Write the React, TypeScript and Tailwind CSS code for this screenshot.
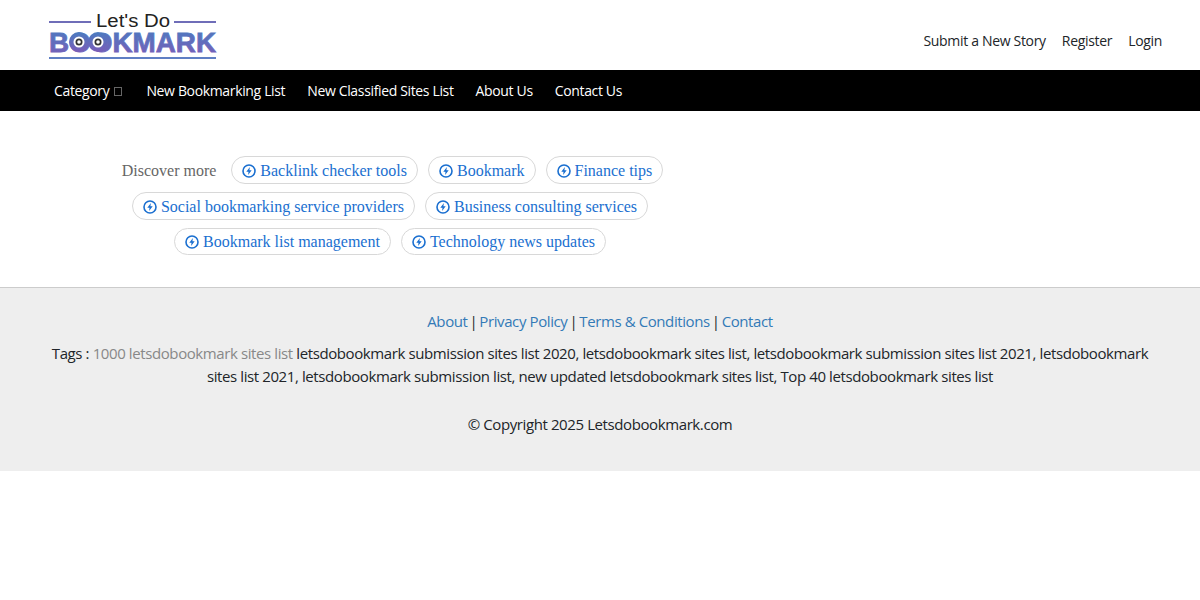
import React from 'react';

const navItems = ['New Bookmarking List', 'New Classified Sites List', 'About Us', 'Contact Us'];

const chipRows = [
  ['Backlink checker tools', 'Bookmark', 'Finance tips'],
  ['Social bookmarking service providers', 'Business consulting services'],
  ['Bookmark list management', 'Technology news updates'],
];

const footerLinks = ['About', 'Privacy Policy', 'Terms & Conditions', 'Contact'];

const BoltIcon = () => (
  <svg viewBox="0 0 14 14" className="w-[14px] h-[14px] shrink-0 mr-[4px] mt-[1px]" fill="none">
    <circle cx="7" cy="7" r="6" stroke="#1a6fd0" strokeWidth="1.6" />
    <path d="M7.9 2.9 4.3 7.8h2.2l-.4 3.3 3.6-4.9H7.4z" fill="#1a6fd0" />
  </svg>
);

const Logo = () => (
  <svg viewBox="0 -3 170 51" className="w-[170px] h-[51px] block">
    <defs>
      <linearGradient id="logoFill" x1="0" y1="0" x2="0" y2="1">
        <stop offset="0" stopColor="#4a7cc0" />
        <stop offset="1" stopColor="#7a5cb8" />
      </linearGradient>
    </defs>
    <rect x="1" y="8" width="42" height="2" fill="#6f6db8" />
    <rect x="126" y="8" width="42" height="2" fill="#6f6db8" />
    <text x="48" y="14" fontFamily="Liberation Sans, sans-serif" fontSize="18" fill="#222" textLength="74" lengthAdjust="spacingAndGlyphs">
      Let's Do
    </text>
    <text x="1" y="39" fontFamily="Liberation Sans, sans-serif" fontWeight="700" fontSize="28" fill="url(#logoFill)" stroke="url(#logoFill)" strokeWidth="0.8" textLength="167" lengthAdjust="spacingAndGlyphs">
      BOOKMARK
    </text>
    {[31, 50].map(cx => (
      <g key={cx}>
        <circle cx={cx} cy="29" r="10" fill="url(#logoFill)" />
        <circle cx={cx} cy="29" r="5.5" fill="#fff" />
        <circle cx={cx} cy="29" r="3.5" fill="#333" />
        <circle cx={cx} cy="29" r="1.8" fill="#fff" />
      </g>
    ))}
    <rect x="1" y="44" width="167" height="2" fill="#5f7fc4" />
  </svg>
);

export default function App() {
  return (
    <div className="bg-white min-h-[600px] font-['Open_Sans',sans-serif] text-[14px] text-[#212529]">
      <header className="h-[70px] flex items-start justify-between pl-[48px] pr-[38px]">
        <div className="pt-[10px]">
          <Logo />
        </div>
        <div className="flex gap-[16px] pt-[31px] leading-[20px] tracking-[-0.32px]">
          <a>Submit a New Story</a>
          <a>Register</a>
          <a>Login</a>
        </div>
      </header>

      <nav className="h-[41px] bg-black text-white flex items-center pl-[54px] gap-[22px] leading-[20px] tracking-[-0.35px]">
        <a className="flex items-center gap-[5px] mr-[2px]">
          Category
          <span className="w-[8px] h-[9px] border border-[#666] mt-[1px]" />
        </a>
        {navItems.map(item => (
          <a key={item}>{item}</a>
        ))}
      </nav>

      <main className="h-[176px] pt-[45px] w-[781px] font-['Liberation_Serif',serif] text-[16px]">
        {chipRows.map((row, i) => (
          <div
            key={i}
            className={`flex justify-center items-center gap-[10px] ${i === 0 ? 'h-[28px] mb-[8px] pl-[4px]' : i === 1 ? 'h-[28px] mb-[8px] pr-[1px]' : 'h-[27px] pr-[1px]'}`}
          >
            {i === 0 && <span className="text-[#666] mr-[5px] pt-[1px]">Discover more</span>}
            {row.map(chip => (
              <a
                key={chip}
                className={`h-full flex items-center px-[10px] rounded-full border border-[#d8d8d8] text-[#1a6fd0] ${i < 2 ? 'pt-[1px]' : ''}`}
              >
                <BoltIcon />
                {chip}
              </a>
            ))}
          </div>
        ))}
      </main>

      <footer className="h-[184px] bg-[#eee] border-t border-[#ccc] text-center text-[15px] tracking-[-0.4px] pt-[22px] px-[48px]">
        <p className="leading-[23px] mb-[9px]">
          {footerLinks.map((link, i) => (
            <React.Fragment key={link}>
              {i > 0 && <span className="mx-[2px]">|</span>}
              <a className="text-[#337ab7]">{link}</a>
            </React.Fragment>
          ))}
        </p>
        <p className="leading-[23px] mb-[25px]">
          Tags : <span className="text-[#888]">1000 letsdobookmark sites list</span> letsdobookmark submission sites list
          2020, letsdobookmark sites list, letsdobookmark submission sites list 2021, letsdobookmark sites list 2021,
          letsdobookmark submission list, new updated letsdobookmark sites list, Top 40 letsdobookmark sites list
        </p>
        <p className="leading-[23px]">© Copyright 2025 Letsdobookmark.com</p>
      </footer>
    </div>
  );
}
